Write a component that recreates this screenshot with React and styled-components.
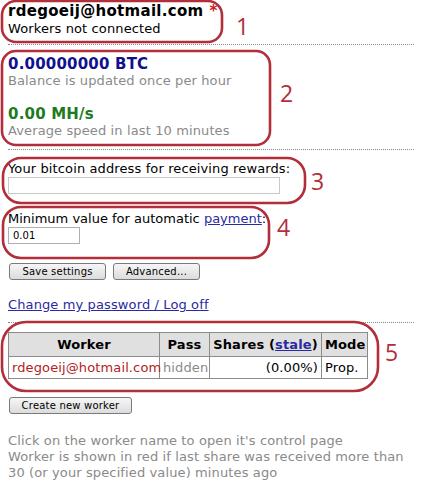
import React from "react";
import styled, { createGlobalStyle } from "styled-components";

const Global = createGlobalStyle`
  html, body { margin: 0; padding: 0; background: #fff; }
  body { font-family: "DejaVu Sans", Verdana, sans-serif; font-size: 13px; color: #000; letter-spacing: 0.12px; }
`;

const Page = styled.div`
  position: relative;
  width: 422px;
  height: 493px;
  box-sizing: border-box;
  padding: 2px 8px 0 8px;
  overflow: hidden;
`;

const Section = styled.div`
  display: flex;
  flex-direction: column;
  padding: ${(p) => p.$pad || "0"};
`;

const Email = styled.div`
  font-weight: bold;
  font-size: 15px;
  line-height: 19px;
  letter-spacing: 0.3px;
`;

const Star = styled.span`
  color: #d02020;
  margin-left: 6px;
`;

const Line = styled.div`
  font-size: 13px;
  line-height: 16px;
  letter-spacing: ${(p) => p.$ls || "0.12px"};
  color: ${(p) => p.$color || "#000"};
  margin-top: ${(p) => p.$mt || "0"};
`;

const Big = styled.div`
  font-weight: bold;
  font-size: 15px;
  line-height: 18px;
  letter-spacing: 0.2px;
  color: ${(p) => p.$color};
  margin-top: ${(p) => p.$mt || "0"};
`;

const Divider = styled.div`
  border-top: 1px dotted #8a8a8a;
  width: 406px;
  margin-top: ${(p) => p.$mt || "0"};
`;

const Link = styled.a`
  color: #2a2aa0;
  text-decoration: underline;
  cursor: pointer;
`;

const Input = styled.input`
  box-sizing: border-box;
  width: ${(p) => p.$w}px;
  height: 17px;
  border: 1px solid ${(p) => p.$border || "#c8c8c8"};
  font-family: "DejaVu Sans", Verdana, sans-serif;
  font-size: 10px;
  padding: 0 0 0 4px;
  margin: 0;
  outline: none;
  background: #fff;
`;

const ButtonRow = styled.div`
  display: flex;
  gap: 7px;
  margin-top: ${(p) => p.$mt || "0"};
  padding-left: 1px;
`;

const Button = styled.button`
  box-sizing: border-box;
  width: ${(p) => p.$w}px;
  height: 17px;
  border: 1px solid #7a7a7a;
  border-radius: 3px;
  background: linear-gradient(#f6f6f6, #dcdcdc);
  font-family: "DejaVu Sans", Verdana, sans-serif;
  font-size: 10px;
  letter-spacing: 0.2px;
  padding: 0;
  color: #000;
`;

const Table = styled.table`
  border-collapse: collapse;
  margin-top: 9px;
  width: 359px;
  table-layout: fixed;
  font-size: 13px;
`;

const Th = styled.th`
  background: #e0e0e0;
  border: 1px solid #8c8c8c;
  height: 23px;
  padding: 0 3px;
  font-weight: bold;
  text-align: center;
  white-space: nowrap;
`;

const Td = styled.td`
  border: 1px solid #8c8c8c;
  height: 21px;
  padding: 0 3px;
  color: ${(p) => p.$color || "#000"};
  text-align: ${(p) => p.$align || "left"};
  white-space: nowrap;
`;

const Help = styled.div`
  color: #8a8a8a;
  font-size: 13px;
  line-height: 16px;
  margin-top: 19px;
`;

const Overlay = styled.svg`
  position: absolute;
  left: 0;
  top: 0;
  pointer-events: none;
`;

const marks = [
  { x: 2, y: 1, w: 220, h: 41, rx: 14, n: "1", nx: 236, ny: 35 },
  { x: 2, y: 51, w: 268, h: 94, rx: 14, n: "2", nx: 280, ny: 102 },
  { x: 3, y: 158, w: 302, h: 45, rx: 18, n: "3", nx: 311, ny: 190 },
  { x: 3, y: 207, w: 266, h: 51, rx: 18, n: "4", nx: 277, ny: 236 },
  { x: 2, y: 322, w: 376, h: 69, rx: 24, n: "5", nx: 385, ny: 361 },
];

export default function App() {
  return (
    <>
      <Global />
      <Page>
        <Section>
          <Email>
            rdegoeij@hotmail.com<Star>*</Star>
          </Email>
          <Line>Workers not connected</Line>
        </Section>
        <Divider $mt="7px" />
        <Section $pad="10px 0 0 0">
          <Big $color="#11118f">0.00000000 BTC</Big>
          <Line $color="#8a8a8a">Balance is updated once per hour</Line>
          <Big $color="#1e7a1e" $mt="16px">0.00 MH/s</Big>
          <Line $color="#8a8a8a">Average speed in last 10 minutes</Line>
        </Section>
        <Divider $mt="10px" />
        <Section $pad="11px 0 0 0">
          <Line>Your bitcoin address for receiving rewards:</Line>
          <Input $w={272} />
          <Line $mt="17px" $ls="0">
            Minimum value for automatic <Link>payment</Link>:
          </Line>
          <Input $w={72} $border="#b0b0b0" defaultValue="0.01" />
          <ButtonRow $mt="19px">
            <Button $w={97}>Save settings</Button>
            <Button $w={87}>Advanced...</Button>
          </ButtonRow>
          <Line $mt="17px">
            <Link>Change my password / Log off</Link>
          </Line>
        </Section>
        <Divider $mt="9px" />
        <Table>
          <colgroup>
            <col style={{ width: 151 }} />
            <col style={{ width: 50 }} />
            <col style={{ width: 112 }} />
            <col style={{ width: 46 }} />
          </colgroup>
          <thead>
            <tr>
              <Th>Worker</Th>
              <Th>Pass</Th>
              <Th>
                Shares (<Link>stale</Link>)
              </Th>
              <Th>Mode</Th>
            </tr>
          </thead>
          <tbody>
            <tr>
              <Td $color="#b22222">rdegoeij@hotmail.com</Td>
              <Td $color="#8a8a8a">hidden</Td>
              <Td $align="right">(0.00%)</Td>
              <Td>Prop.</Td>
            </tr>
          </tbody>
        </Table>
        <ButtonRow $mt="18px">
          <Button $w={123}>Create new worker</Button>
        </ButtonRow>
        <Help>
          Click on the worker name to open it's control page
          <br />
          Worker is shown in red if last share was received more than 30 (or
          your specified value) minutes ago
        </Help>
        <Overlay width="422" height="493" viewBox="0 0 422 493">
          {marks.map((m) => (
            <g key={m.n}>
              <rect
                x={m.x}
                y={m.y}
                width={m.w}
                height={m.h}
                rx={m.rx}
                ry={m.rx}
                fill="none"
                stroke="#b22e3a"
                strokeWidth="2.6"
              />
              <text
                x={m.nx}
                y={m.ny}
                fill="#b22e3a"
                fontFamily="'Open Sans', sans-serif"
                fontSize="23"
                letterSpacing="0"
              >
                {m.n}
              </text>
            </g>
          ))}
        </Overlay>
      </Page>
    </>
  );
}
